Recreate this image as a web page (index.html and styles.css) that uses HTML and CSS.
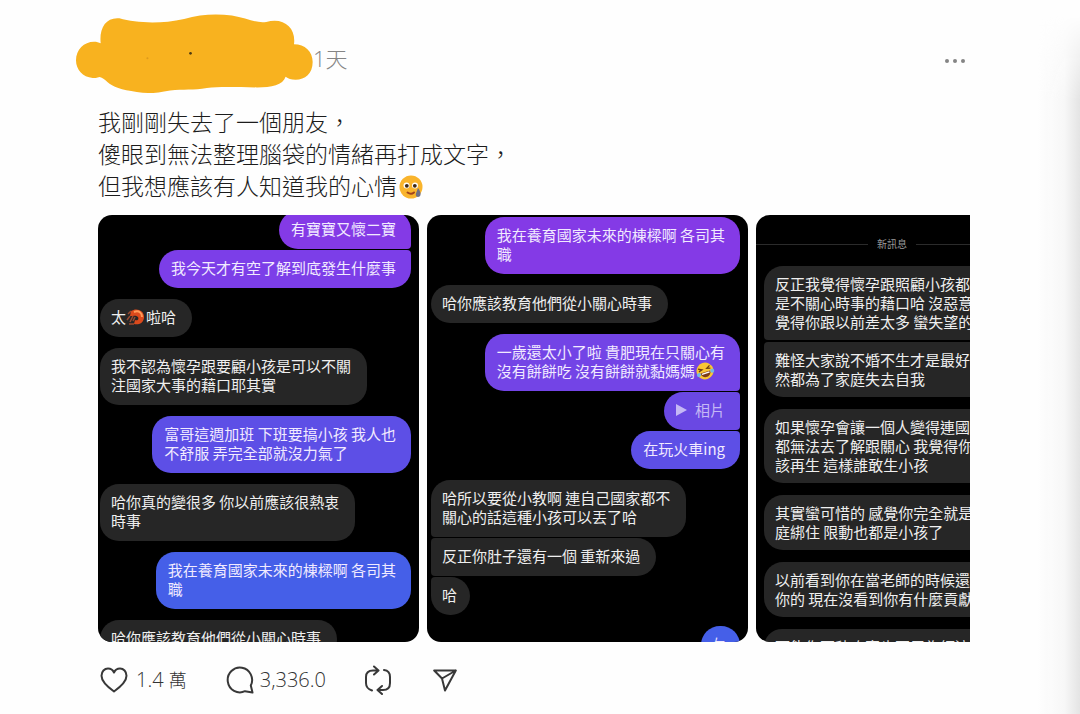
FILE: index.html
```html
<!DOCTYPE html>
<html lang="zh-Hant">
<head>
<meta charset="utf-8">
<meta name="viewport" content="width=device-width, initial-scale=1">
<title>貼文</title>
<link rel="stylesheet" href="styles.css">
</head>
<body>
<article class="post">
  <header class="post-header">
    <svg class="scribble" viewBox="48 44 710 238" aria-hidden="true">
      <path fill="#f8b21f" d="M122 131C117 86 137 52 178 56C228 70 300 74 372 58C420 44 470 42 515 48C560 56 590 72 618 67C670 52 708 84 701 134C734 134 757 156 757 187C757 222 734 240 706 240C692 240 684 236 676 231C668 256 634 263 590 263C530 263 480 260 440 265C400 272 370 268 330 272C290 280 262 282 230 277C184 270 158 262 142 247C132 238 128 234 119 232C110 235 104 235 98 235C68 233 48 210 48 182C48 150 72 126 102 126C110 126 116 128 122 131Z"/>
      <circle cx="391" cy="161" r="4" fill="#4d3a12"/>
      <circle cx="262" cy="176" r="3" fill="#dc9a1c"/>
    </svg>
    <time class="post-time">1天</time>
    <button class="more" type="button" aria-label="更多">
      <svg width="22" height="8" viewBox="0 0 22 8"><g fill="#858585"><circle cx="3" cy="4" r="2"/><circle cx="11" cy="4" r="2"/><circle cx="19" cy="4" r="2"/></g></svg>
    </button>
  </header>

  <p class="post-text">我剛剛失去了一個朋友，<br>傻眼到無法整理腦袋的情緒再打成文字，<br>但我想應該有人知道我的心情<svg class="emoji-tear" viewBox="0 0 24 24" role="img" aria-label="含淚微笑"><circle cx="12" cy="12" r="11.500" fill="#f9b42c"/><circle cx="7.500" cy="10.500" r="3" fill="#fff"/><circle cx="16" cy="10.500" r="3" fill="#fff"/><circle cx="7.800" cy="10.800" r="1.900" fill="#3b2716"/><circle cx="15.800" cy="10.800" r="1.900" fill="#3b2716"/><path d="M8.500 17.500Q12 20 15 17.500" fill="none" stroke="#a0431c" stroke-width="2" stroke-linecap="round"/><path d="M19 13C21 16 22 18 21.500 20C21 22.500 17 22.500 16.800 20C16.800 18 18 16 19 13Z" fill="#6d6f86"/></svg></p>

  <div class="gallery">
    <section class="shot shot-a">
      <p class="msg out v1 tail">有寶寶又懷二寶</p>
      <p class="msg out v2 joined">我今天才有空了解到底發生什麼事</p>
      <p class="msg in">太<svg class="emoji" viewBox="0 0 20 18" role="img" aria-label="蝦"><path d="M5 3C11-1 19 3 18 10C17 16 12 17 8 16L9 12C12 13 13 11 12 9C10 7 7 8 4 8Z" fill="#dc4a1c"/><path d="M8 4C13 2 16 5 16 9" fill="none" stroke="#ff9b58" stroke-width="2"/><path d="M4 8L1 12M7 8L4 14M9 9L7 13M8 16L3 16M5 3L2 6" stroke="#9a4a30" stroke-width="1.500"/></svg>啦哈</p>
      <p class="msg in">我不認為懷孕跟要顧小孩是可以不關<br>注國家大事的藉口耶其實</p>
      <p class="msg out v5">富哥這週加班 下班要搞小孩 我人也<br>不舒服 弄完全部就沒力氣了</p>
      <p class="msg in">哈你真的變很多 你以前應該很熱衷<br>時事</p>
      <p class="msg out v6">我在養育國家未來的棟樑啊 各司其<br>職</p>
      <p class="msg in">哈你應該教育他們從小關心時事</p>
    </section>

    <section class="shot shot-b">
      <p class="msg out v1">我在養育國家未來的棟樑啊 各司其<br>職</p>
      <p class="msg in">哈你應該教育他們從小關心時事</p>
      <p class="msg out v3 tail">一歲還太小了啦 貴肥現在只關心有<br>沒有餅餅吃 沒有餅餅就黏媽媽<svg class="emoji" viewBox="0 0 20 18" role="img" aria-label="笑翻"><g transform="rotate(-18 10 9)"><circle cx="10" cy="9" r="8.500" fill="#f9c534"/><path d="M5 10H15C15 17 5 17 5 10Z" fill="#7b3a18"/><path d="M6 10.500H14V12H6Z" fill="#fff"/><path d="M4 5L7.500 7L4 8M16 5L12.500 7L16 8" fill="none" stroke="#6b3c14" stroke-width="1.300"/><circle cx="3" cy="11" r="2" fill="#70b9e6"/><circle cx="17" cy="11" r="2" fill="#70b9e6"/></g></svg></p>
      <p class="msg out v4 joined tail photo"><svg class="play" viewBox="0 0 11 12" aria-hidden="true"><path d="M0 0L11 6L0 12Z" fill="currentColor"/></svg>相片</p>
      <p class="msg out v5 joined">在玩火車ing</p>
      <p class="msg in tail">哈所以要從小教啊 連自己國家都不<br>關心的話這種小孩可以丟了哈</p>
      <p class="msg in joined tail">反正你肚子還有一個 重新來過</p>
      <p class="msg in joined short">哈</p>
      <p class="msg out v6 short">ㄅ</p>
    </section>

    <section class="shot shot-c">
      <div class="divider"><span>新訊息</span></div>
      <p class="msg in tail">反正我覺得懷孕跟照顧小孩都不<br>是不關心時事的藉口哈 沒惡意 只<br>覺得你跟以前差太多 蠻失望的</p>
      <p class="msg in joined">難怪大家說不婚不生才是最好的 不<br>然都為了家庭失去自我</p>
      <p class="msg in">如果懷孕會讓一個人變得連國家<br>都無法去了解跟關心 我覺得你不<br>該再生 這樣誰敢生小孩</p>
      <p class="msg in">其實蠻可惜的 感覺你完全就是被家<br>庭綁住 限動也都是小孩了</p>
      <p class="msg in">以前看到你在當老師的時候還蠻<br>你的 現在沒看到你有什麼貢獻了</p>
      <p class="msg in">可能你不秒吃寶也不用為經濟</p>
    </section>
  </div>

  <footer class="actions">
    <button class="action like" type="button" aria-label="讚 1.4 萬">
      <svg width="28" height="26" viewBox="0 0 28 26"><path d="M14 24.500C10.500 22 1.500 15.500 1.500 8.800C1.500 4.500 4.500 1.500 8 1.500C11 1.500 13 3.200 14 5.500C15 3.200 17 1.500 20 1.500C23.500 1.500 26.500 4.500 26.500 8.800C26.500 15.500 17.500 22 14 24.500Z"/></svg>
      <span>1.4 <span class="unit">萬</span></span>
    </button>
    <button class="action comment" type="button" aria-label="留言 3,336.0">
      <svg width="28" height="28" viewBox="0 0 28 28"><path d="M26.500 26.500L24.800 19.500A12.200 12.400 0 1 0 19 25.200Z"/></svg>
      <span>3,336.0</span>
    </button>
    <button class="action repost" type="button" aria-label="轉發">
      <svg width="28" height="30" viewBox="0 0 28 30"><path d="M8 25.500C4 24 2 22.500 2 18V12C2 7 4.500 5.500 9 5.500H14M10 1.500L14.500 5.500L10 9.500M20 5C24 5.500 26 8 26 12V18C26 23 23.500 25 19 25H14M18 21L13.500 25L18 29"/></svg>
    </button>
    <button class="action share" type="button" aria-label="分享">
      <svg width="24" height="23" viewBox="0 0 24 23"><path d="M1.200 1.500H22.800L12 21.500L9 9.500ZM1.200 1.500L9 9.500L22.800 1.500"/></svg>
    </button>
  </footer>
  <div class="edge" aria-hidden="true"></div>
</article>
</body>
</html>
```

FILE: styles.css
```css
* { box-sizing: border-box; }

body {
  margin: 0;
  background: #fefefe;
  color: #1c1c1c;
  font-family: "Open Sans", "Noto Sans CJK TC", sans-serif;
}

button {
  padding: 0;
  border: 0;
  background: none;
  color: inherit;
  font: inherit;
  cursor: pointer;
}

p { margin: 0; }

.post {
  position: relative;
  min-height: 100vh;
  padding: 14px 110px 16px 98px;
  overflow: hidden;
}

.edge {
  position: absolute;
  top: 0;
  right: 0;
  bottom: 0;
  width: 44px;
  background: linear-gradient(to right, transparent, #f7f7f7 65%, #e4e4e4);
  mask-image: linear-gradient(transparent 16px, #000 100px);
  pointer-events: none;
}

.post-header {
  display: flex;
  align-items: center;
  height: 91px;
  margin-left: -22px;
  padding-bottom: 11px;
}

.scribble { width: 237px; height: 80px; }

.post-time {
  color: #858585;
  font-size: 22px;
  font-weight: 300;
  line-height: 32px;
  padding-top: 8px;
}

.more {
  display: flex;
  margin-left: auto;
  padding: 14px 4px 0;
}

.post-text {
  font-family: "Noto Sans CJK TC", sans-serif;
  font-size: 23px;
  font-weight: 300;
  line-height: 32px;
  white-space: nowrap;
}

.emoji-tear {
  width: 24px;
  height: 24px;
  margin-left: 2px;
  vertical-align: -4px;
}

.gallery {
  display: flex;
  gap: 8px;
  height: 427px;
  margin-top: 14px;
  overflow: hidden;
}

.shot {
  display: flex;
  flex: 0 0 321px;
  flex-direction: column;
  align-items: flex-start;
  gap: 11px;
  overflow: hidden;
  border-radius: 14px;
  background: #000;
  font-family: "Noto Sans CJK TC", sans-serif;
  font-size: 15px;
  line-height: 19px;
}

.shot-a { padding: 0 8px 0 2px; }
.shot-a .msg:first-child { margin-top: -4px; }
.shot-b { padding: 2px 8px 0 4px; }
.shot-c { gap: 12px; padding: 19px 0 0 8px; }

.msg {
  flex: none;
  padding: 8px 16px 11px 11px;
  border-radius: 19px;
  color: #efefef;
  white-space: nowrap;
}

.msg.out { padding-right: 15px; padding-left: 12px; }
.msg.short { padding-right: 13px; padding-left: 11px; }
.shot-c .msg { padding-bottom: 9px; }

.in { background: #262626; }
.out { align-self: flex-end; color: #f1eaff; }
.joined { margin-top: -10px; }

.out.tail { border-bottom-right-radius: 4px; }
.out.joined { border-top-right-radius: 4px; }
.in.tail { border-bottom-left-radius: 4px; }
.in.joined { border-top-left-radius: 4px; }

.v1 { background: #843ae6; }
.v2 { background: #7c3ee8; }
.v3 { background: #7344e6; }
.v4 { background: #6a48e3; }
.v5 { background: #5d4fe6; }
.v6 { background: #455fe8; }

.photo {
  display: flex;
  align-items: center;
  gap: 8px;
  color: #c5b8f5;
}

.play { width: 11px; height: 12px; }

.emoji {
  width: 20px;
  height: 18px;
  vertical-align: -3px;
}

.divider {
  display: flex;
  align-items: center;
  gap: 9px;
  flex: none;
  width: 305px;
  margin-left: -8px;
  color: #9c9c9c;
  font-size: 10px;
  line-height: 20px;
}

.divider::before,
.divider::after {
  flex: 0 0 112px;
  height: 1px;
  background: #2b2b2b;
  content: "";
}

.actions {
  display: flex;
  align-items: center;
  height: 32px;
  margin-top: 22px;
  padding-left: 2px;
  color: #333;
  font-size: 20px;
  font-weight: 300;
  line-height: 28px;
}

.action {
  display: flex;
  align-items: center;
  gap: 8px;
}

.action svg {
  fill: none;
  stroke: #383838;
  stroke-width: 2;
  stroke-linecap: round;
  stroke-linejoin: round;
}

.unit { font-size: 18px; }
.comment { gap: 6px; margin-left: 39px; }
.repost { margin-left: 38px; }
.share { margin-left: 41px; }
```
